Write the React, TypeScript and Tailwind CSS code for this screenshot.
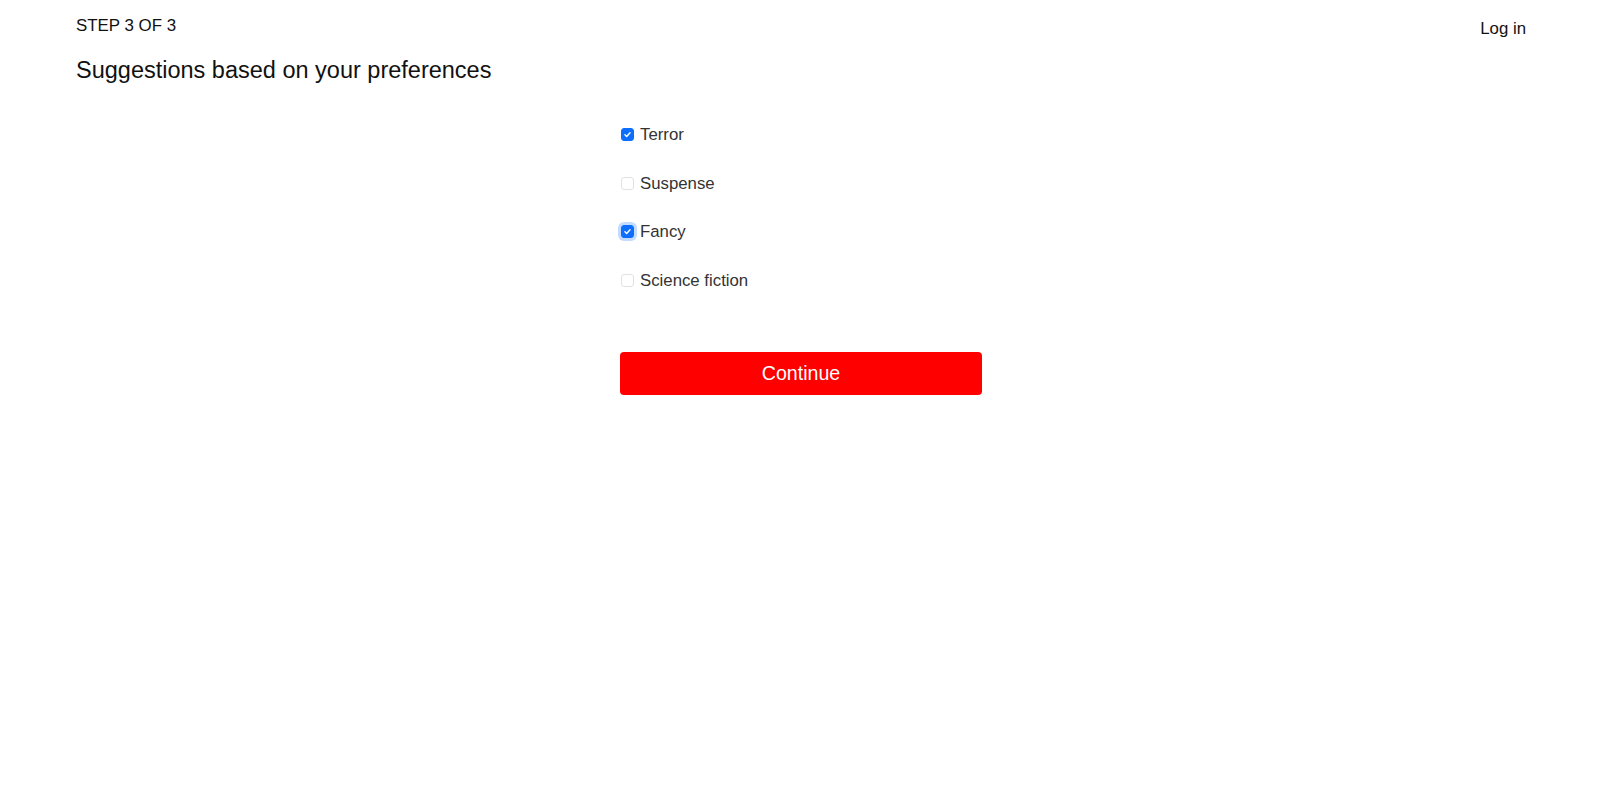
import React, { useState } from "react";

const options = ["Terror", "Suspense", "Fancy", "Science fiction"];

function Box({ checked, focused }: { checked: boolean; focused: boolean }) {
  return (
    <span
      className={
        "flex h-[13px] w-[13px] shrink-0 items-center justify-center rounded-[3px] border " +
        (checked ? "border-[#0d6efd] bg-[#0d6efd] " : "border-[#e2e2e2] bg-white ") +
        (focused ? "ring-[3px] ring-[#0d6efd]/25" : "")
      }
    >
      {checked && (
        <svg width="9" height="9" viewBox="0 0 16 16" fill="none">
          <path d="M3.5 8.5l3 3 6-6.5" stroke="white" strokeWidth="2.6" strokeLinecap="round" strokeLinejoin="round" />
        </svg>
      )}
    </span>
  );
}

export default function App() {
  const [sel, setSel] = useState<Record<string, boolean>>({ Terror: true, Fancy: true });
  return (
    <div className="min-h-screen bg-white font-['Liberation_Sans',Arial,sans-serif] text-[#111]">
      <header className="flex items-start justify-between pl-[76px] pr-[74px] pt-[14px]">
        <div>
          <div className="text-[16.9px] leading-6">STEP 3 OF 3</div>
          <h1 className="mt-[19px] text-[23.5px] leading-[26px]">Suggestions based on your preferences</h1>
        </div>
        <a className="mt-[3px] cursor-pointer text-[16.8px] leading-6">Log in</a>
      </header>
      <main className="mx-auto mt-[40px] w-[364px] pl-[2px]">
        <div className="flex flex-col gap-[24.7px] pl-[1px]">
          {options.map((o) => (
            <label
              key={o}
              className="flex h-6 cursor-pointer items-center gap-[6px] text-[16.8px] text-[#333]"
              onClick={() => setSel((s) => ({ ...s, [o]: !s[o] }))}
            >
              <span className="-mt-[1px]">
                <Box checked={!!sel[o]} focused={o === "Fancy"} />
              </span>
              <span className="leading-6">{o}</span>
            </label>
          ))}
        </div>
        <button className="mt-[59px] h-[43px] w-full rounded-[4px] bg-[#ff0000] pt-[1px] text-[19.6px] text-white">
          Continue
        </button>
      </main>
    </div>
  );
}
